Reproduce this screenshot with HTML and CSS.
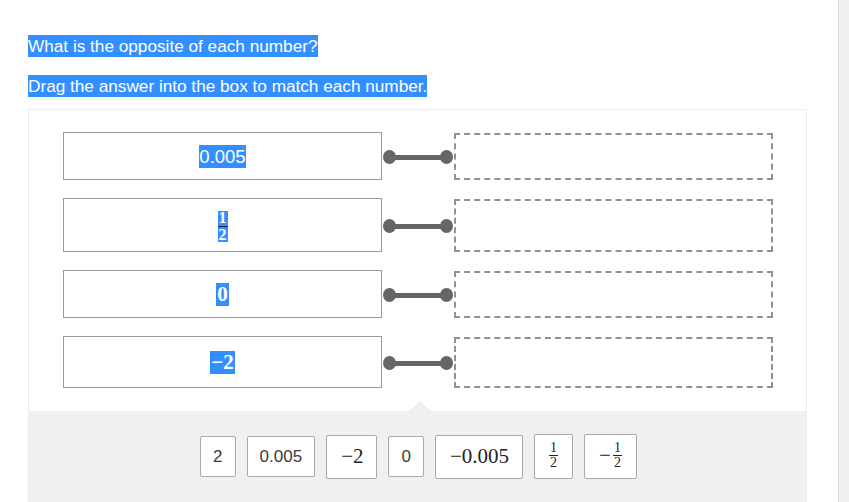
FILE: index.html
```html
<!DOCTYPE html>
<html lang="en">
<head>
<meta charset="utf-8">
<title>Opposites</title>
<link rel="stylesheet" href="styles.css">
</head>
<body>
<div class="page">
  <main class="main">
    <p class="prompt"><span class="sel">What is the opposite of each number?</span></p>
    <p class="prompt"><span class="sel">Drag the answer into the box to match each number.</span></p>
    <section class="matcher">
      <div class="rows">
        <div class="row">
          <div class="term"><span class="sel sans-val">0.005</span></div>
          <div class="link"><i class="dot"></i><i class="bar"></i><i class="dot"></i></div>
          <div class="drop"></div>
        </div>
        <div class="row">
          <div class="term term-frac"><span class="frac frac-sel"><span class="num sel">1</span><span class="den sel">2</span></span></div>
          <div class="link"><i class="dot"></i><i class="bar"></i><i class="dot"></i></div>
          <div class="drop"></div>
        </div>
        <div class="row">
          <div class="term"><span class="sel math-val">0</span></div>
          <div class="link"><i class="dot"></i><i class="bar"></i><i class="dot"></i></div>
          <div class="drop"></div>
        </div>
        <div class="row">
          <div class="term term-tall"><span class="sel math-val">−2</span></div>
          <div class="link"><i class="dot"></i><i class="bar"></i><i class="dot"></i></div>
          <div class="drop"></div>
        </div>
      </div>
      <div class="tray">
        <div class="tile">2</div>
        <div class="tile">0.005</div>
        <div class="tile tile-math">−2</div>
        <div class="tile">0</div>
        <div class="tile tile-math">−0.005</div>
        <div class="tile tile-math tile-frac"><span class="frac"><span class="num">1</span><span class="den">2</span></span></div>
        <div class="tile tile-math tile-frac"><span class="minus">−</span><span class="frac"><span class="num">1</span><span class="den">2</span></span></div>
      </div>
    </section>
  </main>
  <aside class="rail"></aside>
</div>
</body>
</html>
```

FILE: styles.css
```css
* { box-sizing: border-box; }

html, body {
  margin: 0;
  padding: 0;
  background: #ffffff;
  overflow: hidden;
}

body {
  font-family: "Liberation Sans", Arial, sans-serif;
  color: #333333;
}

.page {
  display: flex;
  height: 502px;
}

.main {
  flex: 1;
  padding: 35px 31px 0 28px;
}

.rail {
  width: 11px;
  background: #f0f0f0;
  border-left: 1px solid #d6d6d6;
}

.prompt {
  margin: 0 0 18px 0;
  font-size: 17.2px;
}

.prompt + .prompt {
  margin-bottom: 12px;
}

.sel {
  background: #338fff;
  color: #ffffff;
}

.prompt .sel {
  display: inline-block;
  line-height: 22px;
}

.matcher {
  border: 1px solid #ebebeb;
  border-bottom: none;
  height: 393px;
  display: flex;
  flex-direction: column;
}

.rows {
  padding: 22px 33px 23px 34px;
  display: flex;
  flex-direction: column;
  gap: 18px;
}

.row {
  display: grid;
  grid-template-columns: 319px 72px 319px;
}

.term {
  border: 1px solid #9a9a9a;
  min-height: 48px;
  display: flex;
  align-items: center;
  justify-content: center;
}

.term-frac {
  min-height: 54px;
}

.term-tall {
  min-height: 52px;
}

.sans-val {
  font-family: "Liberation Sans", Arial, sans-serif;
  font-size: 18.5px;
  line-height: 23px;
  margin-top: 1px;
}

.math-val {
  font-family: "Liberation Serif", "Times New Roman", serif;
  font-weight: bold;
  font-size: 21px;
  line-height: 23px;
  padding: 0 1px;
}

.link {
  display: flex;
  align-items: center;
  padding: 2px 1px 0 1px;
}

.dot {
  width: 13px;
  height: 14px;
  border-radius: 50%;
  background: #666666;
  flex: none;
}

.bar {
  flex: 1;
  height: 5px;
  background: #666666;
  margin: 0 -2px;
}

.drop {
  border: 2px dashed #919191;
  margin-top: 1px;
}

.frac {
  display: inline-flex;
  flex-direction: column;
  align-items: center;
  font-family: "Liberation Serif", "Times New Roman", serif;
}

.frac-sel {
  font-size: 16px;
  font-weight: bold;
  line-height: 14px;
  margin-top: 2px;
}

.frac-sel .num {
  padding: 0 1px 1px;
  border-bottom: 1.5px solid #222222;
}

.frac-sel .den {
  padding: 1px 1px 0;
}

.tray {
  flex: 1;
  position: relative;
  background: #f0f0f0;
  display: flex;
  align-items: center;
  justify-content: center;
  gap: 11px;
  padding: 0 0 0 2px;
}

.tray::before {
  content: "";
  position: absolute;
  top: -10px;
  left: calc(50% - 9px);
  border-left: 11px solid transparent;
  border-right: 11px solid transparent;
  border-bottom: 10px solid #f0f0f0;
}

.tile {
  background: #ffffff;
  border: 1px solid #a9a9a9;
  border-radius: 2px;
  height: 41px;
  padding: 0 12px;
  display: flex;
  align-items: center;
  font-family: "Liberation Sans", Arial, sans-serif;
  font-size: 17px;
  color: #3a3a3a;
}

.tile-math {
  height: 44px;
  font-family: "Liberation Serif", "Times New Roman", serif;
  font-size: 21px;
  color: #222222;
  padding: 0 13px 0 14px;
}

.tile-frac {
  height: 45px;
  padding: 0 14px 2px 14px;
}

.tile .frac {
  font-size: 14px;
  line-height: 12px;
}

.tile .frac .num {
  padding: 0 1px 1px;
  border-bottom: 1px solid #222222;
}

.tile .frac .den {
  padding-top: 1px;
}

.minus {
  margin-right: 2px;
}
```
